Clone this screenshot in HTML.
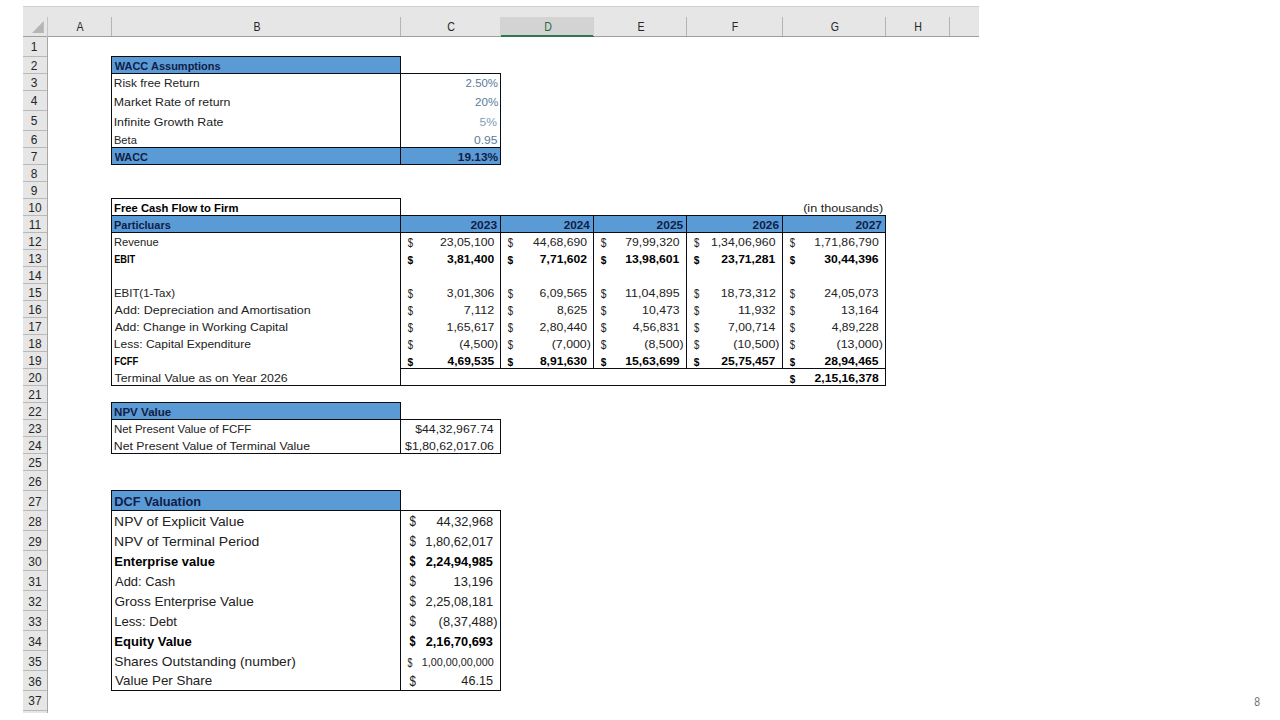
<!DOCTYPE html>
<html lang="en"><head><meta charset="utf-8"><title>DCF Valuation</title>
<style>
html,body{margin:0;padding:0;background:#fff;}
body{width:1280px;height:720px;position:relative;overflow:hidden;font-family:"Liberation Sans",sans-serif;}
div,span,svg{position:absolute;}
span{white-space:pre;line-height:normal;}
</style></head><body>
<div style="left:22.50px;top:6.00px;width:956.00px;height:30.50px;background:#e6e6e6;"></div>
<div style="left:22.50px;top:36.50px;width:24.50px;height:676.00px;background:#e6e6e6;"></div>
<div style="left:22.50px;top:6.00px;width:956.00px;height:1.00px;background:#cfcfcf;"></div>
<div style="left:500.50px;top:17.00px;width:93.25px;height:19.50px;background:#d3d3d3;"></div>
<div style="left:500.50px;top:35.30px;width:93.25px;height:1.60px;background:#2a7a4b;"></div>
<div style="left:22.50px;top:36.00px;width:478.00px;height:1.00px;background:#9e9e9e;"></div>
<div style="left:593.75px;top:36.00px;width:384.75px;height:1.00px;background:#9e9e9e;"></div>
<div style="left:46.50px;top:36.50px;width:1.00px;height:676.00px;background:#a6a6a6;"></div>
<div style="left:46.50px;top:17.00px;width:1.00px;height:19.50px;background:#c4c4c4;"></div>
<div style="left:111.00px;top:17.00px;width:1.00px;height:19.00px;background:#b4b4b4;"></div>
<div style="left:400.00px;top:17.00px;width:1.00px;height:19.00px;background:#b4b4b4;"></div>
<div style="left:500.00px;top:17.00px;width:1.00px;height:19.00px;background:#d3d3d3;"></div>
<div style="left:593.25px;top:17.00px;width:1.00px;height:19.00px;background:#d3d3d3;"></div>
<div style="left:686.10px;top:17.00px;width:1.00px;height:19.00px;background:#b4b4b4;"></div>
<div style="left:781.90px;top:17.00px;width:1.00px;height:19.00px;background:#b4b4b4;"></div>
<div style="left:884.80px;top:17.00px;width:1.00px;height:19.00px;background:#b4b4b4;"></div>
<div style="left:949.00px;top:17.00px;width:1.00px;height:19.00px;background:#b4b4b4;"></div>
<div style="left:22.50px;top:55.80px;width:24.50px;height:1.00px;background:#b9b9b9;"></div>
<div style="left:22.50px;top:72.90px;width:24.50px;height:1.00px;background:#b9b9b9;"></div>
<div style="left:22.50px;top:90.00px;width:24.50px;height:1.00px;background:#b9b9b9;"></div>
<div style="left:22.50px;top:109.50px;width:24.50px;height:1.00px;background:#b9b9b9;"></div>
<div style="left:22.50px;top:130.00px;width:24.50px;height:1.00px;background:#b9b9b9;"></div>
<div style="left:22.50px;top:147.00px;width:24.50px;height:1.00px;background:#b9b9b9;"></div>
<div style="left:22.50px;top:163.90px;width:24.50px;height:1.00px;background:#b9b9b9;"></div>
<div style="left:22.50px;top:180.80px;width:24.50px;height:1.00px;background:#b9b9b9;"></div>
<div style="left:22.50px;top:197.80px;width:24.50px;height:1.00px;background:#b9b9b9;"></div>
<div style="left:22.50px;top:214.90px;width:24.50px;height:1.00px;background:#b9b9b9;"></div>
<div style="left:22.50px;top:232.00px;width:24.50px;height:1.00px;background:#b9b9b9;"></div>
<div style="left:22.50px;top:249.00px;width:24.50px;height:1.00px;background:#b9b9b9;"></div>
<div style="left:22.50px;top:266.10px;width:24.50px;height:1.00px;background:#b9b9b9;"></div>
<div style="left:22.50px;top:283.20px;width:24.50px;height:1.00px;background:#b9b9b9;"></div>
<div style="left:22.50px;top:300.20px;width:24.50px;height:1.00px;background:#b9b9b9;"></div>
<div style="left:22.50px;top:317.20px;width:24.50px;height:1.00px;background:#b9b9b9;"></div>
<div style="left:22.50px;top:334.10px;width:24.50px;height:1.00px;background:#b9b9b9;"></div>
<div style="left:22.50px;top:351.00px;width:24.50px;height:1.00px;background:#b9b9b9;"></div>
<div style="left:22.50px;top:368.00px;width:24.50px;height:1.00px;background:#b9b9b9;"></div>
<div style="left:22.50px;top:385.00px;width:24.50px;height:1.00px;background:#b9b9b9;"></div>
<div style="left:22.50px;top:402.00px;width:24.50px;height:1.00px;background:#b9b9b9;"></div>
<div style="left:22.50px;top:419.00px;width:24.50px;height:1.00px;background:#b9b9b9;"></div>
<div style="left:22.50px;top:436.00px;width:24.50px;height:1.00px;background:#b9b9b9;"></div>
<div style="left:22.50px;top:453.00px;width:24.50px;height:1.00px;background:#b9b9b9;"></div>
<div style="left:22.50px;top:470.00px;width:24.50px;height:1.00px;background:#b9b9b9;"></div>
<div style="left:22.50px;top:490.20px;width:24.50px;height:1.00px;background:#b9b9b9;"></div>
<div style="left:22.50px;top:510.20px;width:24.50px;height:1.00px;background:#b9b9b9;"></div>
<div style="left:22.50px;top:530.20px;width:24.50px;height:1.00px;background:#b9b9b9;"></div>
<div style="left:22.50px;top:550.20px;width:24.50px;height:1.00px;background:#b9b9b9;"></div>
<div style="left:22.50px;top:570.20px;width:24.50px;height:1.00px;background:#b9b9b9;"></div>
<div style="left:22.50px;top:590.20px;width:24.50px;height:1.00px;background:#b9b9b9;"></div>
<div style="left:22.50px;top:610.20px;width:24.50px;height:1.00px;background:#b9b9b9;"></div>
<div style="left:22.50px;top:630.20px;width:24.50px;height:1.00px;background:#b9b9b9;"></div>
<div style="left:22.50px;top:650.20px;width:24.50px;height:1.00px;background:#b9b9b9;"></div>
<div style="left:22.50px;top:670.20px;width:24.50px;height:1.00px;background:#b9b9b9;"></div>
<div style="left:22.50px;top:689.80px;width:24.50px;height:1.00px;background:#b9b9b9;"></div>
<div style="left:22.50px;top:710.10px;width:24.50px;height:1.00px;background:#b9b9b9;"></div>
<svg style="left:32.2px;top:20.9px" width="11.8" height="12" viewBox="0 0 11.8 12"><path d="M11.8 0V12H0Z" fill="#b5b5b5"/></svg>
<div style="left:111.50px;top:56.30px;width:289.00px;height:17.10px;background:#5b9bd5;"></div>
<div style="left:111.50px;top:147.50px;width:389.00px;height:16.90px;background:#5b9bd5;"></div>
<div style="left:111.50px;top:215.40px;width:773.80px;height:17.10px;background:#5b9bd5;"></div>
<div style="left:111.50px;top:402.50px;width:289.00px;height:17.00px;background:#5b9bd5;"></div>
<div style="left:111.50px;top:490.70px;width:289.00px;height:20.00px;background:#5b9bd5;"></div>
<div style="left:110.95px;top:55.75px;width:290.10px;height:1.10px;background:#0c0c14;"></div>
<div style="left:110.95px;top:72.85px;width:290.10px;height:1.10px;background:#0c0c14;"></div>
<div style="left:110.95px;top:56.30px;width:1.10px;height:17.10px;background:#0c0c14;"></div>
<div style="left:399.95px;top:56.30px;width:1.10px;height:17.10px;background:#0c0c14;"></div>
<div style="left:110.95px;top:72.85px;width:290.10px;height:1.10px;background:#0c0c14;"></div>
<div style="left:110.95px;top:146.95px;width:290.10px;height:1.10px;background:#0c0c14;"></div>
<div style="left:110.95px;top:73.40px;width:1.10px;height:74.10px;background:#0c0c14;"></div>
<div style="left:399.95px;top:73.40px;width:1.10px;height:74.10px;background:#0c0c14;"></div>
<div style="left:399.95px;top:72.85px;width:101.10px;height:1.10px;background:#0c0c14;"></div>
<div style="left:399.95px;top:146.95px;width:101.10px;height:1.10px;background:#0c0c14;"></div>
<div style="left:399.95px;top:73.40px;width:1.10px;height:74.10px;background:#0c0c14;"></div>
<div style="left:499.95px;top:73.40px;width:1.10px;height:74.10px;background:#0c0c14;"></div>
<div style="left:110.95px;top:146.95px;width:290.10px;height:1.10px;background:#0c0c14;"></div>
<div style="left:110.95px;top:163.85px;width:290.10px;height:1.10px;background:#0c0c14;"></div>
<div style="left:110.95px;top:147.50px;width:1.10px;height:16.90px;background:#0c0c14;"></div>
<div style="left:399.95px;top:147.50px;width:1.10px;height:16.90px;background:#0c0c14;"></div>
<div style="left:399.95px;top:146.95px;width:101.10px;height:1.10px;background:#0c0c14;"></div>
<div style="left:399.95px;top:163.85px;width:101.10px;height:1.10px;background:#0c0c14;"></div>
<div style="left:399.95px;top:147.50px;width:1.10px;height:16.90px;background:#0c0c14;"></div>
<div style="left:499.95px;top:147.50px;width:1.10px;height:16.90px;background:#0c0c14;"></div>
<div style="left:110.95px;top:197.75px;width:290.10px;height:1.10px;background:#0c0c14;"></div>
<div style="left:110.95px;top:214.85px;width:290.10px;height:1.10px;background:#0c0c14;"></div>
<div style="left:110.95px;top:198.30px;width:1.10px;height:17.10px;background:#0c0c14;"></div>
<div style="left:399.95px;top:198.30px;width:1.10px;height:17.10px;background:#0c0c14;"></div>
<div style="left:110.95px;top:214.85px;width:774.90px;height:1.10px;background:#0c0c14;"></div>
<div style="left:110.95px;top:231.95px;width:774.90px;height:1.10px;background:#0c0c14;"></div>
<div style="left:110.95px;top:215.40px;width:1.10px;height:17.10px;background:#0c0c14;"></div>
<div style="left:884.75px;top:215.40px;width:1.10px;height:17.10px;background:#0c0c14;"></div>
<div style="left:110.95px;top:231.95px;width:774.90px;height:1.10px;background:#0c0c14;"></div>
<div style="left:110.95px;top:384.95px;width:774.90px;height:1.10px;background:#0c0c14;"></div>
<div style="left:110.95px;top:232.50px;width:1.10px;height:153.00px;background:#0c0c14;"></div>
<div style="left:884.75px;top:232.50px;width:1.10px;height:153.00px;background:#0c0c14;"></div>
<div style="left:400.50px;top:367.95px;width:484.80px;height:1.10px;background:#0c0c14;"></div>
<div style="left:399.95px;top:215.40px;width:1.10px;height:170.10px;background:#0c0c14;"></div>
<div style="left:499.95px;top:215.40px;width:1.10px;height:153.10px;background:#0c0c14;"></div>
<div style="left:593.20px;top:215.40px;width:1.10px;height:153.10px;background:#0c0c14;"></div>
<div style="left:686.05px;top:215.40px;width:1.10px;height:153.10px;background:#0c0c14;"></div>
<div style="left:781.85px;top:215.40px;width:1.10px;height:153.10px;background:#0c0c14;"></div>
<div style="left:110.95px;top:401.95px;width:290.10px;height:1.10px;background:#0c0c14;"></div>
<div style="left:110.95px;top:418.95px;width:290.10px;height:1.10px;background:#0c0c14;"></div>
<div style="left:110.95px;top:402.50px;width:1.10px;height:17.00px;background:#0c0c14;"></div>
<div style="left:399.95px;top:402.50px;width:1.10px;height:17.00px;background:#0c0c14;"></div>
<div style="left:110.95px;top:418.95px;width:290.10px;height:1.10px;background:#0c0c14;"></div>
<div style="left:110.95px;top:452.95px;width:290.10px;height:1.10px;background:#0c0c14;"></div>
<div style="left:110.95px;top:419.50px;width:1.10px;height:34.00px;background:#0c0c14;"></div>
<div style="left:399.95px;top:419.50px;width:1.10px;height:34.00px;background:#0c0c14;"></div>
<div style="left:399.95px;top:418.95px;width:101.10px;height:1.10px;background:#0c0c14;"></div>
<div style="left:399.95px;top:452.95px;width:101.10px;height:1.10px;background:#0c0c14;"></div>
<div style="left:399.95px;top:419.50px;width:1.10px;height:34.00px;background:#0c0c14;"></div>
<div style="left:499.95px;top:419.50px;width:1.10px;height:34.00px;background:#0c0c14;"></div>
<div style="left:110.95px;top:490.15px;width:290.10px;height:1.10px;background:#0c0c14;"></div>
<div style="left:110.95px;top:510.15px;width:290.10px;height:1.10px;background:#0c0c14;"></div>
<div style="left:110.95px;top:490.70px;width:1.10px;height:20.00px;background:#0c0c14;"></div>
<div style="left:399.95px;top:490.70px;width:1.10px;height:20.00px;background:#0c0c14;"></div>
<div style="left:110.95px;top:510.15px;width:290.10px;height:1.10px;background:#0c0c14;"></div>
<div style="left:110.95px;top:689.75px;width:290.10px;height:1.10px;background:#0c0c14;"></div>
<div style="left:110.95px;top:510.70px;width:1.10px;height:179.60px;background:#0c0c14;"></div>
<div style="left:399.95px;top:510.70px;width:1.10px;height:179.60px;background:#0c0c14;"></div>
<div style="left:399.95px;top:510.15px;width:101.10px;height:1.10px;background:#0c0c14;"></div>
<div style="left:399.95px;top:689.75px;width:101.10px;height:1.10px;background:#0c0c14;"></div>
<div style="left:399.95px;top:510.70px;width:1.10px;height:179.60px;background:#0c0c14;"></div>
<div style="left:499.95px;top:510.70px;width:1.10px;height:179.60px;background:#0c0c14;"></div>
<span style="top:19px;font-size:12.2px;color:#262626;left:30.05px;width:100px;text-align:center;transform:translateY(0.9px) scale(0.87,1.03);transform-origin:50% 11px;">A</span>
<span style="top:19px;font-size:12.2px;color:#262626;left:206.80px;width:100px;text-align:center;transform:translateY(0.9px) scale(0.87,1.03);transform-origin:50% 11px;">B</span>
<span style="top:19px;font-size:12.2px;color:#262626;left:401.30px;width:100px;text-align:center;transform:translateY(0.9px) scale(0.87,1.03);transform-origin:50% 11px;">C</span>
<span style="top:19px;font-size:12.2px;color:#1f6b43;left:497.92px;width:100px;text-align:center;transform:translateY(0.9px) scale(0.87,1.03);transform-origin:50% 11px;">D</span>
<span style="top:19px;font-size:12.2px;color:#262626;left:590.97px;width:100px;text-align:center;transform:translateY(0.9px) scale(0.87,1.03);transform-origin:50% 11px;">E</span>
<span style="top:19px;font-size:12.2px;color:#262626;left:685.30px;width:100px;text-align:center;transform:translateY(0.9px) scale(0.87,1.03);transform-origin:50% 11px;">F</span>
<span style="top:19px;font-size:12.2px;color:#262626;left:784.65px;width:100px;text-align:center;transform:translateY(0.9px) scale(0.87,1.03);transform-origin:50% 11px;">G</span>
<span style="top:19px;font-size:12.2px;color:#262626;left:868.20px;width:100px;text-align:center;transform:translateY(0.9px) scale(0.87,1.03);transform-origin:50% 11px;">H</span>
<span style="top:40px;font-size:12.6px;color:#262626;left:-15.55px;width:100px;text-align:center;transform:translateY(0.41px) scale(0.95,0.975);transform-origin:50% 11px;">1</span>
<span style="top:58px;font-size:12.6px;color:#262626;left:-15.55px;width:100px;text-align:center;transform:translateY(0.78px) scale(0.95,0.975);transform-origin:50% 11px;">2</span>
<span style="top:75px;font-size:12.6px;color:#262626;left:-15.55px;width:100px;text-align:center;transform:translateY(0.88px) scale(0.95,0.975);transform-origin:50% 11px;">3</span>
<span style="top:94px;font-size:12.6px;color:#262626;left:-15.55px;width:100px;text-align:center;transform:translateY(0.25px) scale(0.95,0.975);transform-origin:50% 11px;">4</span>
<span style="top:114px;font-size:12.6px;color:#262626;left:-15.55px;width:100px;text-align:center;transform:translateY(0.28px) scale(0.95,0.975);transform-origin:50% 11px;">5</span>
<span style="top:132px;font-size:12.6px;color:#262626;left:-15.55px;width:100px;text-align:center;transform:translateY(0.92px) scale(0.95,0.975);transform-origin:50% 11px;">6</span>
<span style="top:149px;font-size:12.6px;color:#262626;left:-15.55px;width:100px;text-align:center;transform:translateY(0.87px) scale(0.95,0.975);transform-origin:50% 11px;">7</span>
<span style="top:166px;font-size:12.6px;color:#262626;left:-15.55px;width:100px;text-align:center;transform:translateY(0.77px) scale(0.95,0.975);transform-origin:50% 11px;">8</span>
<span style="top:183px;font-size:12.6px;color:#262626;left:-15.55px;width:100px;text-align:center;transform:translateY(0.72px) scale(0.95,0.975);transform-origin:50% 11px;">9</span>
<span style="top:200px;font-size:12.6px;color:#262626;left:-14.85px;width:100px;text-align:center;transform:translateY(0.78px) scale(0.95,0.975);transform-origin:50% 11px;">10</span>
<span style="top:217px;font-size:12.6px;color:#262626;left:-14.85px;width:100px;text-align:center;transform:translateY(0.88px) scale(0.95,0.975);transform-origin:50% 11px;">11</span>
<span style="top:234px;font-size:12.6px;color:#262626;left:-14.85px;width:100px;text-align:center;transform:translateY(0.92px) scale(0.95,0.975);transform-origin:50% 11px;">12</span>
<span style="top:251px;font-size:12.6px;color:#262626;left:-14.85px;width:100px;text-align:center;transform:translateY(0.98px) scale(0.95,0.975);transform-origin:50% 11px;">13</span>
<span style="top:269px;font-size:12.6px;color:#262626;left:-14.85px;width:100px;text-align:center;transform:translateY(0.08px) scale(0.95,0.975);transform-origin:50% 11px;">14</span>
<span style="top:286px;font-size:12.6px;color:#262626;left:-14.85px;width:100px;text-align:center;transform:translateY(0.12px) scale(0.95,0.975);transform-origin:50% 11px;">15</span>
<span style="top:303px;font-size:12.6px;color:#262626;left:-14.85px;width:100px;text-align:center;transform:translateY(0.12px) scale(0.95,0.975);transform-origin:50% 11px;">16</span>
<span style="top:320px;font-size:12.6px;color:#262626;left:-14.85px;width:100px;text-align:center;transform:translateY(0.07px) scale(0.95,0.975);transform-origin:50% 11px;">17</span>
<span style="top:336px;font-size:12.6px;color:#262626;left:-14.85px;width:100px;text-align:center;transform:translateY(0.97px) scale(0.95,0.975);transform-origin:50% 11px;">18</span>
<span style="top:353px;font-size:12.6px;color:#262626;left:-14.85px;width:100px;text-align:center;transform:translateY(0.92px) scale(0.95,0.975);transform-origin:50% 11px;">19</span>
<span style="top:370px;font-size:12.6px;color:#262626;left:-14.85px;width:100px;text-align:center;transform:translateY(0.92px) scale(0.95,0.975);transform-origin:50% 11px;">20</span>
<span style="top:387px;font-size:12.6px;color:#262626;left:-14.85px;width:100px;text-align:center;transform:translateY(0.92px) scale(0.95,0.975);transform-origin:50% 11px;">21</span>
<span style="top:404px;font-size:12.6px;color:#262626;left:-14.85px;width:100px;text-align:center;transform:translateY(0.92px) scale(0.95,0.975);transform-origin:50% 11px;">22</span>
<span style="top:421px;font-size:12.6px;color:#262626;left:-14.85px;width:100px;text-align:center;transform:translateY(0.92px) scale(0.95,0.975);transform-origin:50% 11px;">23</span>
<span style="top:438px;font-size:12.6px;color:#262626;left:-14.85px;width:100px;text-align:center;transform:translateY(0.92px) scale(0.95,0.975);transform-origin:50% 11px;">24</span>
<span style="top:455px;font-size:12.6px;color:#262626;left:-14.85px;width:100px;text-align:center;transform:translateY(0.92px) scale(0.95,0.975);transform-origin:50% 11px;">25</span>
<span style="top:474px;font-size:12.6px;color:#262626;left:-14.85px;width:100px;text-align:center;transform:translateY(0.62px) scale(0.95,0.975);transform-origin:50% 11px;">26</span>
<span style="top:494px;font-size:12.6px;color:#262626;left:-14.85px;width:100px;text-align:center;transform:translateY(0.71px) scale(0.95,0.975);transform-origin:50% 11px;">27</span>
<span style="top:514px;font-size:12.6px;color:#262626;left:-14.85px;width:100px;text-align:center;transform:translateY(0.71px) scale(0.95,0.975);transform-origin:50% 11px;">28</span>
<span style="top:534px;font-size:12.6px;color:#262626;left:-14.85px;width:100px;text-align:center;transform:translateY(0.71px) scale(0.95,0.975);transform-origin:50% 11px;">29</span>
<span style="top:554px;font-size:12.6px;color:#262626;left:-14.85px;width:100px;text-align:center;transform:translateY(0.71px) scale(0.95,0.975);transform-origin:50% 11px;">30</span>
<span style="top:574px;font-size:12.6px;color:#262626;left:-14.85px;width:100px;text-align:center;transform:translateY(0.71px) scale(0.95,0.975);transform-origin:50% 11px;">31</span>
<span style="top:594px;font-size:12.6px;color:#262626;left:-14.85px;width:100px;text-align:center;transform:translateY(0.71px) scale(0.95,0.975);transform-origin:50% 11px;">32</span>
<span style="top:614px;font-size:12.6px;color:#262626;left:-14.85px;width:100px;text-align:center;transform:translateY(0.71px) scale(0.95,0.975);transform-origin:50% 11px;">33</span>
<span style="top:634px;font-size:12.6px;color:#262626;left:-14.85px;width:100px;text-align:center;transform:translateY(0.71px) scale(0.95,0.975);transform-origin:50% 11px;">34</span>
<span style="top:654px;font-size:12.6px;color:#262626;left:-14.85px;width:100px;text-align:center;transform:translateY(0.71px) scale(0.95,0.975);transform-origin:50% 11px;">35</span>
<span style="top:674px;font-size:12.6px;color:#262626;left:-14.85px;width:100px;text-align:center;transform:translateY(0.5px) scale(0.95,0.975);transform-origin:50% 11px;">36</span>
<span style="top:694px;font-size:12.6px;color:#262626;left:-14.85px;width:100px;text-align:center;transform:translateY(0.47px) scale(0.95,0.975);transform-origin:50% 11px;">37</span>
<span style="top:58px;font-size:12.2px;color:#111d48;font-weight:bold;left:114px;transform:translate(0.69px,0.6px) scale(0.9027,0.835);transform-origin:0 11px;">WACC Assumptions</span>
<span style="top:75px;font-size:12.2px;color:#222;left:113px;transform:translate(0.86px,0.8px) scale(0.9744,0.835);transform-origin:0 11px;">Risk free Return</span>
<span style="top:94px;font-size:12.2px;color:#222;left:113px;transform:translate(0.8px,0.8px) scale(1.0134,0.835);transform-origin:0 11px;">Market Rate of return</span>
<span style="top:114px;font-size:12.2px;color:#222;left:113px;transform:translate(0.67px,0.8px) scale(1.02,0.835);transform-origin:0 11px;">Infinite Growth Rate</span>
<span style="top:132px;font-size:12.2px;color:#222;left:113px;transform:translate(0.95px,0.6px) scale(0.9124,0.835);transform-origin:0 11px;">Beta</span>
<span style="top:149px;font-size:12.2px;color:#111d48;font-weight:bold;left:114px;transform:translate(0.69px,0.8px) scale(0.8913,0.835);transform-origin:0 11px;">WACC</span>
<span style="top:200px;font-size:12.2px;color:#000;font-weight:bold;left:114px;transform:translate(0.02px,0.6px) scale(0.9232,0.835);transform-origin:0 11px;">Free Cash Flow to Firm</span>
<span style="top:217px;font-size:12.2px;color:#111d48;font-weight:bold;left:114px;transform:translate(0.05px,0.7px) scale(0.9006,0.835);transform-origin:0 11px;">Particluars</span>
<span style="top:234px;font-size:12.2px;color:#222;left:113px;transform:translate(0.98px,0.7px) scale(0.9173,0.835);transform-origin:0 11px;">Revenue</span>
<span style="top:251px;font-size:12.2px;color:#000;font-weight:bold;left:114px;transform:translate(0.14px,0.8px) scale(0.7554,0.835);transform-origin:0 11px;">EBIT</span>
<span style="top:285px;font-size:12.2px;color:#222;left:113px;transform:translate(0.94px,0.9px) scale(0.9389,0.835);transform-origin:0 11px;">EBIT(1-Tax)</span>
<span style="top:302px;font-size:12.2px;color:#222;left:114px;transform:translate(0.62px,0.9px) scale(1.0257,0.835);transform-origin:0 11px;">Add: Depreciation and Amortisation</span>
<span style="top:319px;font-size:12.2px;color:#222;left:114px;transform:translate(0.63px,0.8px) scale(1.0003,0.835);transform-origin:0 11px;">Add: Change in Working Capital</span>
<span style="top:336px;font-size:12.2px;color:#222;left:113px;transform:translate(0.85px,0.7px) scale(0.9863,0.835);transform-origin:0 11px;">Less: Capital Expenditure</span>
<span style="top:353px;font-size:12.2px;color:#000;font-weight:bold;left:114px;transform:translate(0.13px,0.7px) scale(0.7732,0.835);transform-origin:0 11px;">FCFF</span>
<span style="top:370px;font-size:12.2px;color:#222;left:114px;transform:translate(0.51px,0.7px) scale(1.0116,0.835);transform-origin:0 11px;">Terminal Value as on Year 2026</span>
<span style="top:404px;font-size:12.2px;color:#111d48;font-weight:bold;left:114px;transform:translate(0.02px,0.7px) scale(0.9503,0.835);transform-origin:0 11px;">NPV Value</span>
<span style="top:421px;font-size:12.2px;color:#222;left:113px;transform:translate(0.92px,0.7px) scale(0.94,0.835);transform-origin:0 11px;">Net Present Value of FCFF</span>
<span style="top:438px;font-size:12.2px;color:#222;left:113px;transform:translate(0.81px,0.7px) scale(1.0092,0.835);transform-origin:0 11px;">Net Present Value of Terminal Value</span>
<span style="top:493px;font-size:13.8px;color:#111d48;font-weight:bold;left:114px;transform:translate(0.32px,0.7px) scale(0.9276,0.9);transform-origin:0 12px;">DCF Valuation</span>
<span style="top:513px;font-size:13.8px;color:#222;left:114px;transform:translate(0.12px,0.7px) scale(1.0051,0.9);transform-origin:0 12px;">NPV of Explicit Value</span>
<span style="top:533px;font-size:13.8px;color:#222;left:114px;transform:translate(0.1px,0.7px) scale(1.0139,0.9);transform-origin:0 12px;">NPV of Terminal Period</span>
<span style="top:553px;font-size:13.8px;color:#000;font-weight:bold;left:114px;transform:translate(0.32px,0.7px) scale(0.9363,0.9);transform-origin:0 12px;">Enterprise value</span>
<span style="top:573px;font-size:13.8px;color:#222;left:115px;transform:translate(0.08px,0.7px) scale(0.9333,0.9);transform-origin:0 12px;">Add: Cash</span>
<span style="top:593px;font-size:13.8px;color:#222;left:114px;transform:translate(0.45px,0.7px) scale(0.9842,0.9);transform-origin:0 12px;">Gross Enterprise Value</span>
<span style="top:613px;font-size:13.8px;color:#222;left:114px;transform:translate(0.2px,0.7px) scale(0.9518,0.9);transform-origin:0 12px;">Less: Debt</span>
<span style="top:633px;font-size:13.8px;color:#000;font-weight:bold;left:114px;transform:translate(0.32px,0.7px) scale(0.9448,0.9);transform-origin:0 12px;">Equity Value</span>
<span style="top:653px;font-size:13.8px;color:#222;left:114px;transform:translate(0.23px,0.7px) scale(0.9999,0.9);transform-origin:0 12px;">Shares Outstanding (number)</span>
<span style="top:673px;font-size:13.8px;color:#222;left:115px;transform:translate(0.06px,0.3px) scale(0.9687,0.9);transform-origin:0 12px;">Value Per Share</span>
<span style="top:75px;font-size:12.2px;color:#5a7b9a;right:782px;transform:translate(0.39px,0.8px) scale(0.9356,0.835);transform-origin:100% 11px;">2.50%</span>
<span style="top:94px;font-size:12.2px;color:#5a7b9a;right:783px;transform:translate(0.87px,0.8px) scale(0.9503,0.835);transform-origin:100% 11px;">20%</span>
<span style="top:114px;font-size:12.2px;color:#7f9db8;right:783px;transform:translate(0.35px,0.8px) scale(0.9858,0.835);transform-origin:100% 11px;">5%</span>
<span style="top:132px;font-size:12.2px;color:#5a7b9a;right:783px;transform:translate(0.83px,0.6px) scale(0.9922,0.835);transform-origin:100% 11px;">0.95</span>
<span style="top:149px;font-size:12.2px;color:#111d48;font-weight:bold;right:783px;transform:translate(0.74px,0.8px) scale(0.9726,0.835);transform-origin:100% 11px;">19.13%</span>
<span style="top:217px;font-size:12.2px;color:#111d48;font-weight:bold;right:784px;transform:translate(0.96px,0.7px) scale(0.984,0.835);transform-origin:100% 11px;">2023</span>
<span style="top:217px;font-size:12.2px;color:#111d48;font-weight:bold;right:691px;transform:translate(0.77px,0.7px) scale(0.9661,0.835);transform-origin:100% 11px;">2024</span>
<span style="top:217px;font-size:12.2px;color:#111d48;font-weight:bold;right:597px;transform:translate(0.08px,0.7px) scale(0.9809,0.835);transform-origin:100% 11px;">2025</span>
<span style="top:217px;font-size:12.2px;color:#111d48;font-weight:bold;right:502px;transform:translate(0.99px,0.7px) scale(0.9775,0.835);transform-origin:100% 11px;">2026</span>
<span style="top:217px;font-size:12.2px;color:#111d48;font-weight:bold;right:399px;transform:translate(0.84px,0.7px) scale(0.9794,0.835);transform-origin:100% 11px;">2027</span>
<span style="top:200px;font-size:12.2px;color:#222;right:398px;transform:translate(0.89px,0.6px) scale(1.0353,0.835);transform-origin:100% 11px;">(in thousands)</span>
<span style="top:235px;font-size:12.2px;color:#222;left:407px;transform:translate(0.84px,0.6px) scale(0.7869,0.98);transform-origin:0 11px;">$</span>
<span style="top:234px;font-size:12.2px;color:#222;right:786px;transform:translate(0.13px,0.7px) scale(1.0044,0.835);transform-origin:100% 11px;">23,05,100</span>
<span style="top:235px;font-size:12.2px;color:#222;left:507px;transform:translate(0.84px,0.6px) scale(0.7869,0.98);transform-origin:0 11px;">$</span>
<span style="top:234px;font-size:12.2px;color:#222;right:694px;transform:translate(0.72px,0.7px) scale(0.9958,0.835);transform-origin:100% 11px;">44,68,690</span>
<span style="top:235px;font-size:12.2px;color:#222;left:600px;transform:translate(0.83px,0.6px) scale(0.8385,0.9957);transform-origin:0 11px;">$</span>
<span style="top:234px;font-size:12.2px;color:#222;right:601px;transform:translate(0.31px,0.7px) scale(1.0021,0.835);transform-origin:100% 11px;">79,99,320</span>
<span style="top:235px;font-size:12.2px;color:#222;left:694px;transform:translate(0.04px,0.6px) scale(0.7869,0.98);transform-origin:0 11px;">$</span>
<span style="top:234px;font-size:12.2px;color:#222;right:505px;transform:translate(0.09px,0.7px) scale(1.0032,0.835);transform-origin:100% 11px;">1,34,06,960</span>
<span style="top:235px;font-size:12.2px;color:#222;left:789px;transform:translate(0.76px,0.6px) scale(0.7899,0.9779);transform-origin:0 11px;">$</span>
<span style="top:234px;font-size:12.2px;color:#222;right:402px;transform:translate(0.31px,0.7px) scale(1.0021,0.835);transform-origin:100% 11px;">1,71,86,790</span>
<span style="top:252px;font-size:12.2px;color:#000;font-weight:bold;left:407px;transform:translate(0.5px,0.7px) scale(0.8352,0.8931);transform-origin:0 11px;">$</span>
<span style="top:251px;font-size:12.2px;color:#000;font-weight:bold;right:787px;transform:translate(0.72px,0.8px) scale(0.9956,0.835);transform-origin:100% 11px;">3,81,400</span>
<span style="top:252px;font-size:12.2px;color:#000;font-weight:bold;left:507px;transform:translate(0.5px,0.7px) scale(0.8352,0.8931);transform-origin:0 11px;">$</span>
<span style="top:251px;font-size:12.2px;color:#000;font-weight:bold;right:694px;transform:translate(0.48px,0.8px) scale(0.9926,0.835);transform-origin:100% 11px;">7,71,602</span>
<span style="top:252px;font-size:12.2px;color:#000;font-weight:bold;left:600px;transform:translate(0.83px,0.7px) scale(0.8302,0.901);transform-origin:0 11px;">$</span>
<span style="top:251px;font-size:12.2px;color:#000;font-weight:bold;right:601px;transform:translate(0.18px,0.8px) scale(1.0002,0.835);transform-origin:100% 11px;">13,98,601</span>
<span style="top:252px;font-size:12.2px;color:#000;font-weight:bold;left:693px;transform:translate(0.7px,0.7px) scale(0.8352,0.8931);transform-origin:0 11px;">$</span>
<span style="top:251px;font-size:12.2px;color:#000;font-weight:bold;right:506px;transform:translate(0.98px,0.8px) scale(0.9945,0.835);transform-origin:100% 11px;">23,71,281</span>
<span style="top:252px;font-size:12.2px;color:#000;font-weight:bold;left:789px;transform:translate(0.72px,0.7px) scale(0.7958,0.8931);transform-origin:0 11px;">$</span>
<span style="top:251px;font-size:12.2px;color:#000;font-weight:bold;right:402px;transform:translate(0.3px,0.8px) scale(1.0002,0.835);transform-origin:100% 11px;">30,44,396</span>
<span style="top:286px;font-size:12.2px;color:#222;left:407px;transform:translate(0.84px,0.8px) scale(0.7869,0.98);transform-origin:0 11px;">$</span>
<span style="top:285px;font-size:12.2px;color:#222;right:787px;transform:translate(0.73px,0.9px) scale(0.9971,0.835);transform-origin:100% 11px;">3,01,306</span>
<span style="top:286px;font-size:12.2px;color:#222;left:507px;transform:translate(0.84px,0.8px) scale(0.7869,0.98);transform-origin:0 11px;">$</span>
<span style="top:285px;font-size:12.2px;color:#222;right:694px;transform:translate(0.57px,0.9px) scale(1.0017,0.835);transform-origin:100% 11px;">6,09,565</span>
<span style="top:286px;font-size:12.2px;color:#222;left:600px;transform:translate(0.83px,0.8px) scale(0.8385,0.9957);transform-origin:0 11px;">$</span>
<span style="top:285px;font-size:12.2px;color:#222;right:601px;transform:translate(0.45px,0.9px) scale(1.0255,0.835);transform-origin:100% 11px;">11,04,895</span>
<span style="top:286px;font-size:12.2px;color:#222;left:694px;transform:translate(0.04px,0.8px) scale(0.7869,0.98);transform-origin:0 11px;">$</span>
<span style="top:285px;font-size:12.2px;color:#222;right:505px;transform:translate(0.56px,0.9px) scale(1.0156,0.835);transform-origin:100% 11px;">18,73,312</span>
<span style="top:286px;font-size:12.2px;color:#222;left:789px;transform:translate(0.76px,0.8px) scale(0.7899,0.9779);transform-origin:0 11px;">$</span>
<span style="top:285px;font-size:12.2px;color:#222;right:402px;transform:translate(0.38px,0.9px) scale(1.0023,0.835);transform-origin:100% 11px;">24,05,073</span>
<span style="top:303px;font-size:12.2px;color:#222;left:407px;transform:translate(0.84px,0.8px) scale(0.7869,0.98);transform-origin:0 11px;">$</span>
<span style="top:302px;font-size:12.2px;color:#222;right:786px;transform:translate(0.73px,0.9px) scale(1.0333,0.835);transform-origin:100% 11px;">7,112</span>
<span style="top:303px;font-size:12.2px;color:#222;left:507px;transform:translate(0.84px,0.8px) scale(0.7869,0.98);transform-origin:0 11px;">$</span>
<span style="top:302px;font-size:12.2px;color:#222;right:694px;transform:translate(0.63px,0.9px) scale(0.9912,0.835);transform-origin:100% 11px;">8,625</span>
<span style="top:303px;font-size:12.2px;color:#222;left:600px;transform:translate(0.83px,0.8px) scale(0.8385,0.9957);transform-origin:0 11px;">$</span>
<span style="top:302px;font-size:12.2px;color:#222;right:601px;transform:translate(0.4px,0.9px) scale(1.0082,0.835);transform-origin:100% 11px;">10,473</span>
<span style="top:303px;font-size:12.2px;color:#222;left:694px;transform:translate(0.04px,0.8px) scale(0.7869,0.98);transform-origin:0 11px;">$</span>
<span style="top:302px;font-size:12.2px;color:#222;right:505px;transform:translate(0.13px,0.9px) scale(1.0341,0.835);transform-origin:100% 11px;">11,932</span>
<span style="top:303px;font-size:12.2px;color:#222;left:789px;transform:translate(0.76px,0.8px) scale(0.7899,0.9779);transform-origin:0 11px;">$</span>
<span style="top:302px;font-size:12.2px;color:#222;right:402px;transform:translate(0.22px,0.9px) scale(1.0031,0.835);transform-origin:100% 11px;">13,164</span>
<span style="top:320px;font-size:12.2px;color:#222;left:407px;transform:translate(0.84px,0.7px) scale(0.7869,0.98);transform-origin:0 11px;">$</span>
<span style="top:319px;font-size:12.2px;color:#222;right:786px;transform:translate(0.03px,0.8px) scale(1.0102,0.835);transform-origin:100% 11px;">1,65,617</span>
<span style="top:320px;font-size:12.2px;color:#222;left:507px;transform:translate(0.84px,0.7px) scale(0.7869,0.98);transform-origin:0 11px;">$</span>
<span style="top:319px;font-size:12.2px;color:#222;right:694px;transform:translate(0.56px,0.8px) scale(1.0011,0.835);transform-origin:100% 11px;">2,80,440</span>
<span style="top:320px;font-size:12.2px;color:#222;left:600px;transform:translate(0.83px,0.7px) scale(0.8385,0.9957);transform-origin:0 11px;">$</span>
<span style="top:319px;font-size:12.2px;color:#222;right:601px;transform:translate(0.31px,0.8px) scale(0.99,0.835);transform-origin:100% 11px;">4,56,831</span>
<span style="top:320px;font-size:12.2px;color:#222;left:694px;transform:translate(0.04px,0.7px) scale(0.7869,0.98);transform-origin:0 11px;">$</span>
<span style="top:319px;font-size:12.2px;color:#222;right:506px;transform:translate(0.82px,0.8px) scale(0.9958,0.835);transform-origin:100% 11px;">7,00,714</span>
<span style="top:320px;font-size:12.2px;color:#222;left:789px;transform:translate(0.76px,0.7px) scale(0.7899,0.9779);transform-origin:0 11px;">$</span>
<span style="top:319px;font-size:12.2px;color:#222;right:402px;transform:translate(0.19px,0.8px) scale(0.9874,0.835);transform-origin:100% 11px;">4,89,228</span>
<span style="top:337px;font-size:12.2px;color:#222;left:407px;transform:translate(0.84px,0.6px) scale(0.7869,0.98);transform-origin:0 11px;">$</span>
<span style="top:336px;font-size:12.2px;color:#222;right:782px;transform:translate(0.6px,0.7px) scale(1.0116,0.835);transform-origin:100% 11px;">(4,500)</span>
<span style="top:337px;font-size:12.2px;color:#222;left:507px;transform:translate(0.84px,0.6px) scale(0.7869,0.98);transform-origin:0 11px;">$</span>
<span style="top:336px;font-size:12.2px;color:#222;right:689px;transform:translate(0.19px,0.7px) scale(1.0116,0.835);transform-origin:100% 11px;">(7,000)</span>
<span style="top:337px;font-size:12.2px;color:#222;left:600px;transform:translate(0.83px,0.6px) scale(0.8385,0.9957);transform-origin:0 11px;">$</span>
<span style="top:336px;font-size:12.2px;color:#222;right:597px;transform:translate(0.96px,0.7px) scale(1.0157,0.835);transform-origin:100% 11px;">(8,500)</span>
<span style="top:337px;font-size:12.2px;color:#222;left:694px;transform:translate(0.04px,0.6px) scale(0.7869,0.98);transform-origin:0 11px;">$</span>
<span style="top:336px;font-size:12.2px;color:#222;right:501px;transform:translate(0.0px,0.7px) scale(1.0146,0.835);transform-origin:100% 11px;">(10,500)</span>
<span style="top:337px;font-size:12.2px;color:#222;left:789px;transform:translate(0.76px,0.6px) scale(0.7899,0.9779);transform-origin:0 11px;">$</span>
<span style="top:336px;font-size:12.2px;color:#222;right:398px;transform:translate(0.4px,0.7px) scale(1.0179,0.835);transform-origin:100% 11px;">(13,000)</span>
<span style="top:354px;font-size:12.2px;color:#000;font-weight:bold;left:407px;transform:translate(0.5px,0.6px) scale(0.8352,0.8931);transform-origin:0 11px;">$</span>
<span style="top:353px;font-size:12.2px;color:#000;font-weight:bold;right:787px;transform:translate(0.64px,0.7px) scale(0.9819,0.835);transform-origin:100% 11px;">4,69,535</span>
<span style="top:354px;font-size:12.2px;color:#000;font-weight:bold;left:507px;transform:translate(0.5px,0.6px) scale(0.8352,0.8931);transform-origin:0 11px;">$</span>
<span style="top:353px;font-size:12.2px;color:#000;font-weight:bold;right:694px;transform:translate(0.54px,0.7px) scale(0.9926,0.835);transform-origin:100% 11px;">8,91,630</span>
<span style="top:354px;font-size:12.2px;color:#000;font-weight:bold;left:600px;transform:translate(0.83px,0.6px) scale(0.8302,0.901);transform-origin:0 11px;">$</span>
<span style="top:353px;font-size:12.2px;color:#000;font-weight:bold;right:601px;transform:translate(0.3px,0.7px) scale(1.0025,0.835);transform-origin:100% 11px;">15,63,699</span>
<span style="top:354px;font-size:12.2px;color:#000;font-weight:bold;left:693px;transform:translate(0.7px,0.6px) scale(0.8352,0.8931);transform-origin:0 11px;">$</span>
<span style="top:353px;font-size:12.2px;color:#000;font-weight:bold;right:505px;transform:translate(0.09px,0.7px) scale(0.9966,0.835);transform-origin:100% 11px;">25,75,457</span>
<span style="top:354px;font-size:12.2px;color:#000;font-weight:bold;left:789px;transform:translate(0.72px,0.6px) scale(0.7958,0.8931);transform-origin:0 11px;">$</span>
<span style="top:353px;font-size:12.2px;color:#000;font-weight:bold;right:402px;transform:translate(0.21px,0.7px) scale(0.9955,0.835);transform-origin:100% 11px;">28,94,465</span>
<span style="top:371px;font-size:12.2px;color:#000;font-weight:bold;left:789px;transform:translate(0.72px,0.6px) scale(0.8177,0.8922);transform-origin:0 11px;">$</span>
<span style="top:370px;font-size:12.2px;color:#000;font-weight:bold;right:402px;transform:translate(0.24px,0.7px) scale(0.9945,0.835);transform-origin:100% 11px;">2,15,16,378</span>
<span style="top:421px;font-size:12.2px;color:#222;right:787px;transform:translate(0.61px,0.7px) scale(1.0051,0.835);transform-origin:100% 11px;">$44,32,967.74</span>
<span style="top:438px;font-size:12.2px;color:#222;right:787px;transform:translate(0.78px,0.7px) scale(1.008,0.835);transform-origin:100% 11px;">$1,80,62,017.06</span>
<span style="top:515px;font-size:12.7px;color:#222;left:409px;transform:translate(0.52px,0.4px) scale(0.9113,1.1324);transform-origin:0 11px;">$</span>
<span style="top:514px;font-size:12.7px;color:#222;right:788px;transform:translate(0.58px,0.7px) scale(1.0021,0.96);transform-origin:100% 11px;">44,32,968</span>
<span style="top:535px;font-size:12.7px;color:#222;left:409px;transform:translate(0.52px,0.4px) scale(0.9113,1.1324);transform-origin:0 11px;">$</span>
<span style="top:534px;font-size:12.7px;color:#222;right:787px;transform:translate(0.02px,0.7px) scale(1.0113,0.96);transform-origin:100% 11px;">1,80,62,017</span>
<span style="top:555px;font-size:12.7px;color:#000;font-weight:bold;left:409px;transform:translate(0.55px,0.4px) scale(0.8549,1.1299);transform-origin:0 11px;">$</span>
<span style="top:554px;font-size:12.7px;color:#000;font-weight:bold;right:788px;transform:translate(0.83px,0.7px) scale(1.0017,0.96);transform-origin:100% 11px;">2,24,94,985</span>
<span style="top:575px;font-size:12.7px;color:#222;left:409px;transform:translate(0.52px,0.4px) scale(0.9113,1.1324);transform-origin:0 11px;">$</span>
<span style="top:574px;font-size:12.7px;color:#222;right:787px;transform:translate(0.17px,0.7px) scale(1.0184,0.96);transform-origin:100% 11px;">13,196</span>
<span style="top:595px;font-size:12.7px;color:#222;left:409px;transform:translate(0.52px,0.4px) scale(0.9113,1.1324);transform-origin:0 11px;">$</span>
<span style="top:594px;font-size:12.7px;color:#222;right:788px;transform:translate(0.99px,0.7px) scale(1.0069,0.96);transform-origin:100% 11px;">2,25,08,181</span>
<span style="top:615px;font-size:12.7px;color:#222;left:409px;transform:translate(0.52px,0.4px) scale(0.9113,1.1324);transform-origin:0 11px;">$</span>
<span style="top:614px;font-size:12.7px;color:#222;right:783px;transform:translate(0.59px,0.7px) scale(1.017,0.96);transform-origin:100% 11px;">(8,37,488)</span>
<span style="top:635px;font-size:12.7px;color:#000;font-weight:bold;left:409px;transform:translate(0.55px,0.4px) scale(0.8549,1.1299);transform-origin:0 11px;">$</span>
<span style="top:634px;font-size:12.7px;color:#000;font-weight:bold;right:788px;transform:translate(0.92px,0.7px) scale(1.0031,0.96);transform-origin:100% 11px;">2,16,70,693</span>
<span style="top:675px;font-size:12.7px;color:#222;left:409px;transform:translate(0.52px,0.0px) scale(0.9113,1.1324);transform-origin:0 11px;">$</span>
<span style="top:674px;font-size:12.7px;color:#222;right:787px;transform:translate(0.2px,0.3px) scale(0.9945,0.96);transform-origin:100% 11px;">46.15</span>
<span style="top:656px;font-size:11px;color:#222;left:407px;transform:translate(0.41px,0.5px) scale(0.8025,1.1276);transform-origin:0 10px;">$</span>
<span style="top:655px;font-size:11px;color:#222;right:787px;transform:translate(0.38px,0.7px) scale(0.98,0.978);transform-origin:100% 10px;">1,00,00,00,000</span>
<span style="top:695px;font-size:12.6px;color:#707070;left:1254px;transform:translate(0.37px,0.0px) scale(0.8288,0.9497);transform-origin:0 11px;">8</span>
</body></html>
